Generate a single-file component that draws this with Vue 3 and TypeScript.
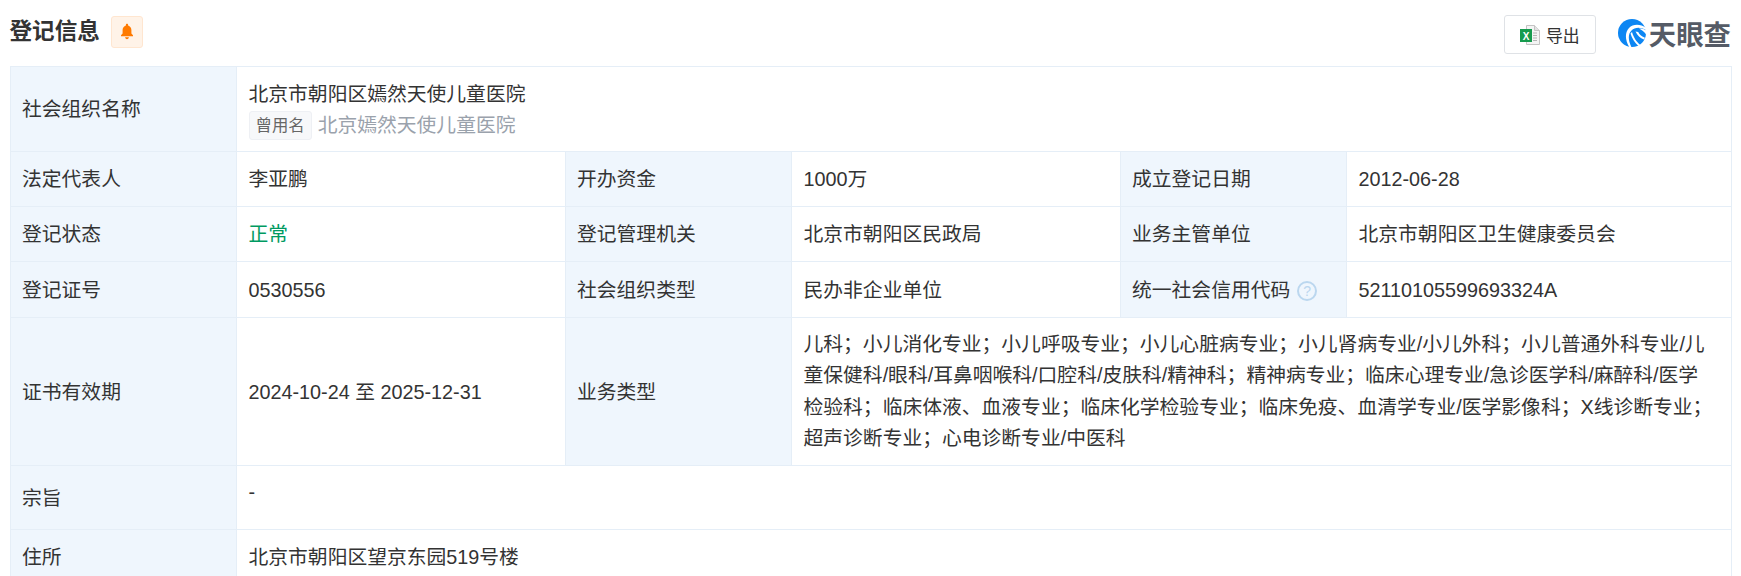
<script setup lang="ts">
const business = '儿科；小儿消化专业；小儿呼吸专业；小儿心脏病专业；小儿肾病专业/小儿外科；小儿普通外科专业/儿童保健科/眼科/耳鼻咽喉科/口腔科/皮肤科/精神科；精神病专业；临床心理专业/急诊医学科/麻醉科/医学检验科；临床体液、血液专业；临床化学检验专业；临床免疫、血清学专业/医学影像科；X线诊断专业；超声诊断专业；心电诊断专业/中医科'
</script>

<template>
  <div class="page">
    <header class="head">
      <div class="title-wrap">
        <h2 class="title">登记信息</h2>
        <span class="bell">
          <svg width="16" height="17" viewBox="0 0 16 17"><path fill="#ff7a00" d="M8 .8c.7 0 1.100.5 1.100 1.100v.6c2 .6 3.300 2.400 3.300 4.600v3.300l1.600 1.900v1H2v-1l1.600-1.900V7.100c0-2.200 1.300-4 3.300-4.600v-.6C6.900 1.300 7.300.8 8 .8zM6.100 14.300h3.800c0 1.100-.9 1.900-1.900 1.900s-1.900-.8-1.900-1.900z"/></svg>
        </span>
      </div>
      <div class="tools">
        <button class="export">
          <svg class="xls" width="20" height="20" viewBox="0 0 20 20">
            <path d="M6.500.5h8l5 5v14h-13z" fill="#f4f4f4" stroke="#c4c4c4"/>
            <path d="M14.500.5v5h5" fill="#e2e2e2" stroke="#c4c4c4"/>
            <path d="M13 8h4M13 10.500h4M13 13h4M13 15.500h4" stroke="#b4b4b4"/>
            <rect x="0" y="4" width="12" height="13" fill="#169b4e"/>
            <text x="6" y="14.500" class="xl">X</text>
          </svg>
          <span>导出</span>
        </button>
        <div class="logo">
          <svg width="28" height="28" viewBox="0 0 28 28">
            <circle cx="14" cy="14" r="14" fill="#0c86f3"/>
            <path d="M28.500 9.500C23 4.500 15 4.700 11 9 6.800 13.500 6.800 21 11.500 28.500l2 -.2C9.800 21 10 15 13.500 11.500c3.500-3.400 9-3.600 15-.2z" fill="#fff"/>
            <path d="M12.500 14.500c1.500 5 4 9 8 12.500l1.800-1c-4-3.500-6.500-7-8.300-13z" fill="#fff"/>
            <path d="M17.500 12.500c2 4 4.500 6.500 8.500 8l1-1.800c-3-1-5.500-3-6.800-5.700z" fill="#fff"/>
            <path d="M21 9.500c2.300-.3 5 .3 7.500 2.200v4.300c-1.800-2.800-4.300-5-7.500-6.500z" fill="#fff"/>
          </svg>
          <span class="logo-text">天眼查</span>
        </div>
      </div>
    </header>
    <table class="info">
      <colgroup>
        <col class="c1"><col class="c2"><col class="c3"><col class="c4"><col class="c5"><col class="c6">
      </colgroup>
      <tbody>
        <tr class="r1">
          <th>社会组织名称</th>
          <td colspan="5">
            <div>北京市朝阳区嫣然天使儿童医院</div>
            <div class="former"><span class="tag">曾用名</span><span class="old">北京嫣然天使儿童医院</span></div>
          </td>
        </tr>
        <tr class="r2"><th>法定代表人</th><td>李亚鹏</td><th>开办资金</th><td>1000万</td><th>成立登记日期</th><td>2012-06-28</td></tr>
        <tr class="r2"><th>登记状态</th><td class="ok">正常</td><th>登记管理机关</th><td>北京市朝阳区民政局</td><th>业务主管单位</th><td>北京市朝阳区卫生健康委员会</td></tr>
        <tr class="r4"><th>登记证号</th><td>0530556</td><th>社会组织类型</th><td>民办非企业单位</td>
          <th><span class="help-wrap">统一社会信用代码<span class="help">?</span></span></th><td>52110105599693324A</td></tr>
        <tr class="r5"><th>证书有效期</th><td>2024-10-24 至 2025-12-31</td><th>业务类型</th><td colspan="3" class="long">{{ business }}</td></tr>
        <tr class="r6"><th>宗旨</th><td colspan="5" class="top">-</td></tr>
        <tr class="r2"><th>住所</th><td colspan="5">北京市朝阳区望京东园519号楼</td></tr>
      </tbody>
    </table>
  </div>
</template>

<style>
html, body { margin: 0; background: #fff; overflow: hidden; }
</style>

<style scoped>
.page {
  width: 1741px; height: 576px; overflow: hidden; box-sizing: border-box; padding: 0 10px;
  font-family: "Liberation Sans", "Noto Sans CJK SC", sans-serif; color: #333;
}
.head { height: 66px; display: flex; justify-content: space-between; align-items: flex-start; }
.title-wrap { display: flex; align-items: center; gap: 11px; margin-top: 15px; }
.title { margin: 1px 0 0 -0.5px; font-size: 22.6px; line-height: 32px; font-weight: 700; color: #333; }
.bell { width: 32px; height: 32px; display: flex; align-items: center; justify-content: center; background: #fff3e8; border: 1px solid #ffe6d0; border-radius: 3px; box-sizing: border-box; }
.tools { display: flex; align-items: center; gap: 22px; margin-top: 15px; }
.export { display: flex; align-items: center; gap: 6px; height: 39px; width: 92px; padding: 0; justify-content: center; background: #fff; border: 1px solid #dfe2e6; border-radius: 3px; font: 16.9px "Noto Sans CJK SC", sans-serif; color: #333; }
.xl { font: 700 10px "Liberation Sans", sans-serif; fill: #fff; text-anchor: middle; }
.logo { display: flex; align-items: center; gap: 3px; margin-top: -3px; }
.logo-text { font-family: "Noto Sans CJK SC", sans-serif; font-size: 27.4px; line-height: 32px; font-weight: 700; color: #555b66; }
.info { width: 1721px; table-layout: fixed; border-collapse: collapse; font-size: 19.8px; line-height: 31.4px; }
.c1 { width: 226px; } .c2 { width: 329px; } .c3 { width: 226px; } .c4 { width: 329px; } .c5 { width: 226px; } .c6 { width: 385px; }
th, td { box-sizing: border-box; border: 1px solid #e5eef7; padding: 2px 12px 0 11.5px; text-align: left; font-weight: 400; vertical-align: middle; color: #333; }
th { background: #eff6fd; padding-left: 11px; }
.r1 th, .r1 td { height: 85px; }
.r2 th, .r2 td { height: 55px; }
.r4 th, .r4 td { height: 56px; }
.r5 th, .r5 td { height: 148px; }
.r6 th, .r6 td { height: 64px; }
.long { padding: 0 18px 0 11.5px; }
.top { vertical-align: top; padding-top: 11px; }
.r1 td { line-height: 31px; }
.ok { color: #009a61; }
.former { display: flex; align-items: center; gap: 6px; }
.tag { font-size: 16.4px; line-height: 27px; padding: 0 6px; background: #f7f8fa; border: 1px solid #eef0f4; border-radius: 3px; color: #666; }
.old { color: #9aa2ac; }
.help-wrap { display: flex; align-items: center; gap: 7px; }
.help { width: 20px; height: 20px; box-sizing: border-box; border: 2px solid #bbd7ef; border-radius: 50%; display: inline-flex; align-items: center; justify-content: center; color: #bbd7ef; font-size: 14px; line-height: 1; }
</style>
